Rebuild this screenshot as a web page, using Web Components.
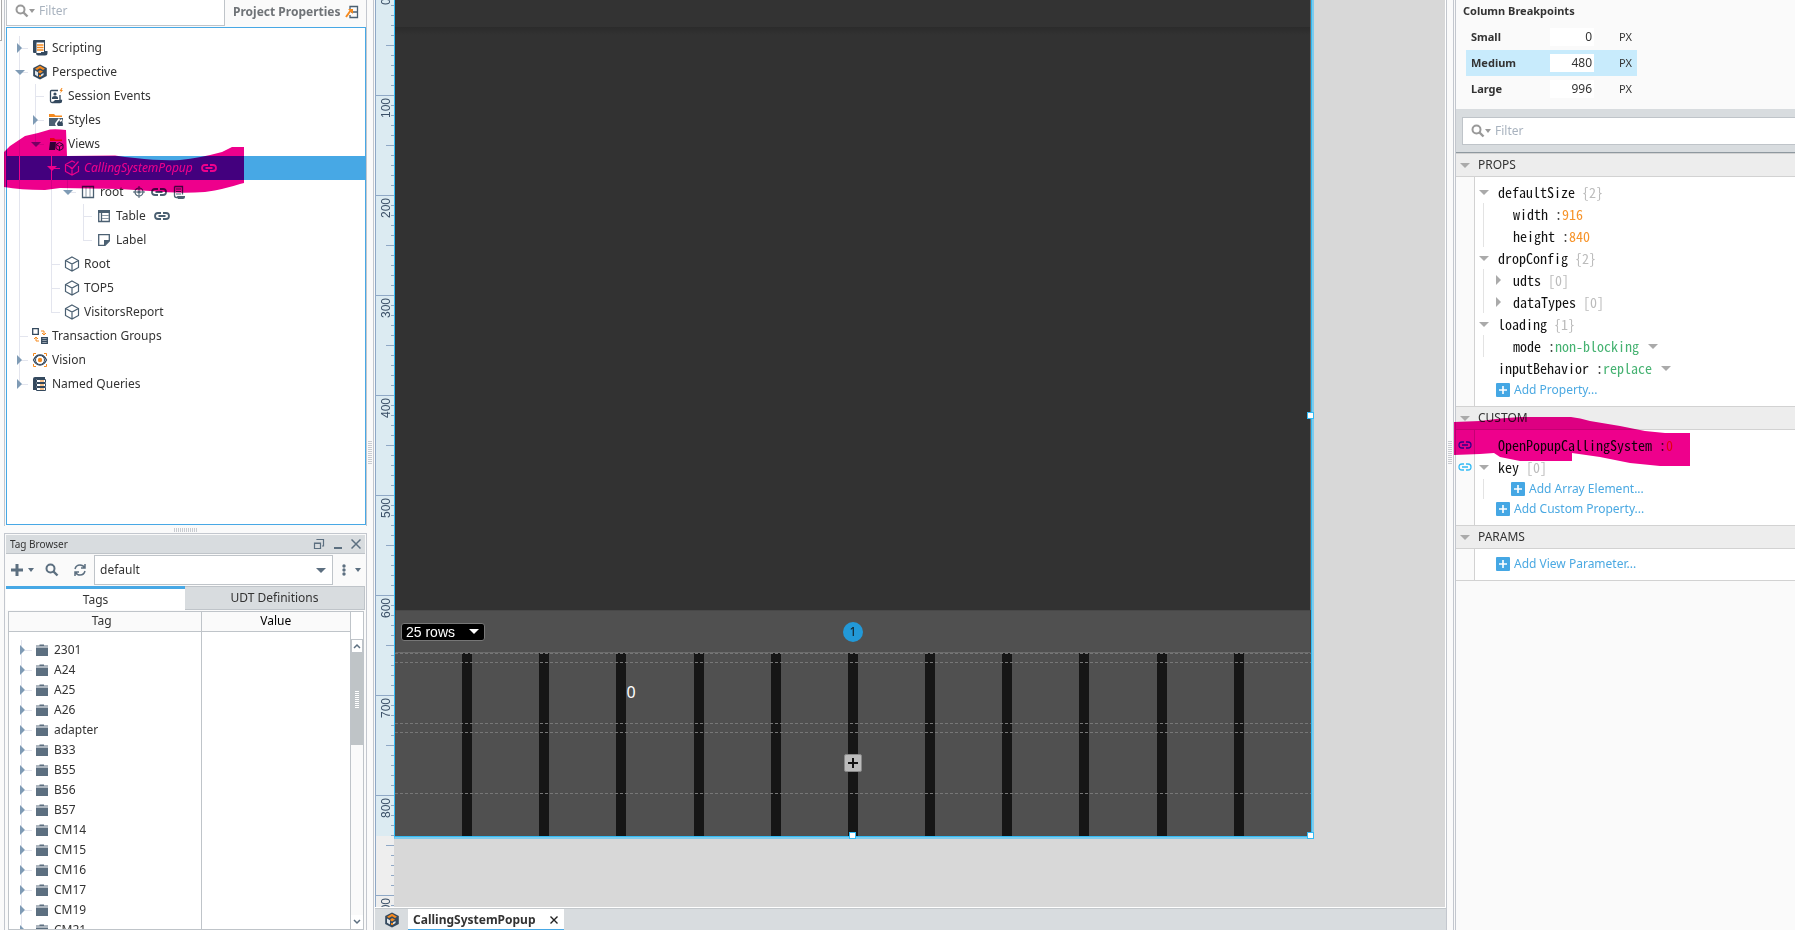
<!DOCTYPE html>
<html lang="en">
<head>
<meta charset="utf-8">
<title>Designer</title>
<style>
    html, body{
        height: 100%;
        margin: 0;
    }
    body{
        overflow: hidden;
        background-color: #fafafa;
        color: #333;
        font: 12px/20px "Noto Sans", "Open Sans", sans-serif;
    }
</style>
</head>
<body>
<designer-app></designer-app>

<script>
const BASE = /*html*/`
<style>
    *{ box-sizing: border-box; }
    button, input, select{
        font: inherit;
        color: inherit;
        margin: 0;
        padding: 0;
        border: 0;
        background: none;
        border-radius: 0;
        outline: 0;
    }
    a{ text-decoration: none; color: inherit; }
    svg, ui-icon{ flex: none; }
</style>
`

const define = (name, html, setup) => {
    const template = document.createElement('template');
    template.innerHTML = BASE + html;
    customElements.define(name, class extends HTMLElement{
        constructor(){
            super();
            this.attachShadow({mode: 'open'})
            this.shadowRoot.appendChild(template.content.cloneNode(true))
        }
        connectedCallback(){
            if (setup) setup(this, this.shadowRoot)
        }
    })
}

// ---------- icons, [viewBox width, viewBox height, markup]
const CUBE = '<path d="M8 1 14.5 4.500V11.500L8 15 1.500 11.500V4.500ZM1.500 4.500 8 8l6.500-3.500M8 8v7" fill="none" stroke="currentColor" stroke-width="1.200"/>';
const ICONS = {
    right: [6, 10, '<path d="M0 0 5 5 0 10Z" fill="currentColor"/>'],
    down: [10, 5, '<path d="M0 0H10L5 5Z" fill="currentColor"/>'],
    smalldown: [6, 4, '<path d="M0 0H6L3 4Z" fill="currentColor"/>'],
    scripting: [16, 16, '<path d="M2 0H13V11H15.500V13Q15.500 15.500 13 15.500H6Q4 15.500 4 13H2Q1 13 1 12V1Q1 0 2 0Z" fill="#34495e"/><path d="M4.500 2.500H12V12H9V13H4.500Z" fill="#fff"/><path d="M5 5H11.500M5 7.500H11.500M5 10H11.500" stroke="#f58a1f" stroke-width="1.300"/>'],
    perspective: [16, 16, '<path d="M8 .5 14.800 4V12L8 15.500 1.200 12V4Z" fill="#34495e"/><path d="M3 4.800 8 1.700l5 3.100-2 1.200L8 4.200 5 6Z" fill="#f58a1f"/><path d="M3 6.500 6 8.200V12.500L3 10.800Z" fill="#dfe5ea"/><path d="M8 6 11 7.500 8 9.500 6 8Z" fill="#f58a1f"/><path d="M9 10.500 11.500 9V11L9 12.500Z" fill="#dfe5ea"/><path d="M7 11h2v2H7Z" fill="#f58a1f"/>'],
    session: [16, 16, '<path d="M10 2.500H3.500Q2.500 2.500 2.500 3.500V13Q2.500 14.500 4 14.500H12Q13.500 14.500 13.500 12.500H12V7" fill="none" stroke="#34495e" stroke-width="1.300"/><path d="M5 14 7 12h7q0 3-2 3H5Z" fill="#34495e"/><circle cx="7" cy="6" r="1.600" fill="#34495e"/><path d="M4 10q0-2 3-2t3 2v1H4Z" fill="#34495e"/><path d="M13.500 0 11.500 3H13L12 5.500 15 2H13.500L14.500 0Z" fill="#f58a1f"/>'],
    styles: [16, 16, '<path d="M1 2H6L7.500 3.500H14V5H1Z" fill="#f58a1f"/><path d="M1 6H15V14H1Z" fill="#4b6072"/><path d="M8 14q-2-2 0-4l3-4 1 2 2-1 1 4-1 3Z" fill="#fff"/><path d="M10 14q-2-2 0-4l1.500-2 .5 2 2-1 1 3-1 2Z" fill="#34495e"/>'],
    views: [16, 16, '<path d="M2 2H6L7.500 3.500H14V5H2Z" fill="#f58a1f"/><path d="M2 6H8L7 14H1Z" fill="#34495e"/><path d="M11.500 6.500 15 8.500V12.500L11.500 14.500 8 12.500V8.500ZM8 8.500 11.500 10.500 15 8.500M11.500 10.500V14.500" fill="none" stroke="#34495e"/>'],
    cube: [16, 16, CUBE],
    cubeedit: [16, 16, '<path d="M14.500 6V11.500L8 15 1.500 11.500V4.500L8 1 11 2.500M1.500 4.500 8 8V15M5.500 6.500 8 9 14.500 1.500" fill="none" stroke="currentColor" stroke-width="1.200"/>'],
    columns: [14, 14, '<path d="M1.500 1.500h11v11h-11Z" fill="none" stroke="#4b6072" stroke-width="1.300"/><path d="M5 2v10M9 2v10" stroke="#8c99a5"/>'],
    target: [14, 14, '<circle cx="7" cy="7" r="4" fill="none" stroke="#4b6072" stroke-width="1.200"/><circle cx="7" cy="7" r="1.800" fill="#4b6072"/><path d="M7 1V5M7 9V13M1 7H5M9 7H13" stroke="#4b6072"/>'],
    link: [16, 8, '<path d="M7 1H4Q1 1 1 4T4 7H7M9 1h3q3 0 3 3T12 7H9M4.500 4h7" fill="none" stroke="currentColor" stroke-width="1.800"/>'],
    linkthin: [14, 8, '<path d="M6 1H4Q1 1 1 4T4 7H6M8 1h2q3 0 3 3T10 7H8M4 4h6" fill="none" stroke="currentColor" stroke-width="1.300"/>'],
    script: [14, 14, '<path d="M2.500 1.500h8v8M2.500 1.500v9q0 2 2 2h6" fill="none" stroke="#4b6072" stroke-width="1.300"/><path d="M4 4h5M4 6.500h5M4 9h5" stroke="#4b6072"/><path d="M5 11h8v1q0 2-2 2H6Z" fill="#4b6072"/>'],
    table: [14, 14, '<path d="M1 1h12v3H1Z" fill="#4b6072"/><path d="M1.700 2v10.500h10.600V2M4.500 4v8.500" fill="none" stroke="#4b6072" stroke-width="1.300"/><path d="M5 6.500h7M5 9.500h7" stroke="#8c99a5"/>'],
    label: [14, 14, '<path d="M1.700 1.700h10.600V8L8 12.300H1.700Z" fill="none" stroke="#4b6072" stroke-width="1.300"/><path d="M7 13V7h6Z" fill="#4b6072"/>'],
    transaction: [16, 16, '<path d="M.7.700h5.600v5.600H.700ZM9.700 9.700h5.600v5.600H9.700ZM10 11.500h5M10 13.500h5" fill="none" stroke="#34495e" stroke-width="1.300"/><path d="M9 3h3v3M10 5l2 2 2-2M7 13H4v-3M2 11l2-2 2 2" fill="none" stroke="#f58a1f"/>'],
    vision: [16, 16, '<path d="M1.500 4V1.500H4M12 1.500h2.500V4M14.500 12v2.500H12M4 14.500H1.500V12" fill="none" stroke="#f58a1f"/><path d="M1.500 8Q4 3 8 3t6.500 5q-2.500 5-6.500 5T1.500 8Z" fill="none" stroke="#34495e" stroke-width="1.300"/><circle cx="8" cy="8" r="4.500" fill="#fff" stroke="#34495e"/><circle cx="8" cy="8" r="2.200" fill="#f58a1f"/>'],
    queries: [16, 16, '<path d="M1 3Q1 1 3 1H13V3H4V14H1Z" fill="#34495e"/><path d="M4.500 3.500h9v3h-9ZM4.500 7.500h9v3h-9ZM4.500 11.500h9v3h-9Z" fill="#fff" stroke="#34495e"/><path d="M8 5h4M8 9h4M8 13h4" stroke="#f58a1f"/>'],
    folder: [14, 12, '<path d="M1 1.500H4.500V.5H9V1.500H13V2.500H1Z" fill="#5c6f80"/><path d="M1 3.500H13V12H1Z" fill="#5c6f80"/>'],
    search: [14, 14, '<circle cx="5.500" cy="5.500" r="4" fill="none" stroke="currentColor" stroke-width="2"/><path d="M8.500 8.500 12.500 12.500" stroke="currentColor" stroke-width="2.400"/>'],
    plus: [12, 12, '<path d="M6 0V12M0 6H12" stroke="currentColor" stroke-width="3"/>'],
    refresh: [14, 14, '<path d="M2 6Q3 2 7 2q3 0 5 3M12 1v4H8M12 8q-1 4-5 4-3 0-5-3M2 13V9H6" fill="none" stroke="currentColor" stroke-width="1.500"/>'],
    dots: [4, 12, '<circle cx="2" cy="2" r="1.700" fill="currentColor"/><circle cx="2" cy="6" r="1.700" fill="currentColor"/><circle cx="2" cy="10" r="1.700" fill="currentColor"/>'],
    restore: [12, 12, '<path d="M1.500 5h6v5.500h-6ZM1 5.500h7M4 2V1.500H10.500V8H9" fill="none" stroke="currentColor" stroke-width="1.200"/>'],
    minimize: [8, 12, '<path d="M0 10H8" stroke="currentColor" stroke-width="2"/>'],
    close: [10, 10, '<path d="M.5.500 9.500 9.500M9.500.500.5 9.500" stroke="currentColor" stroke-width="1.500"/>'],
    export: [14, 14, '<path d="M5 4V1.500H12.500V12.500H5V10M6 7h6" fill="none" stroke="#4b6072" stroke-width="1.300"/><path d="M1 12 6 5" stroke="#f58a1f" stroke-width="2"/><path d="M3 4H8V9Z" fill="#f58a1f"/>'],
    add: [14, 14, '<rect width="14" height="14" rx="1" fill="#45a7e4"/><path d="M7 3V11M3 7H11" stroke="#fff" stroke-width="1.600"/>'],
    chevup: [8, 6, '<path d="M1 5 4 2 7 5" fill="none" stroke="currentColor" stroke-width="1.500"/>'],
    chevdown: [8, 6, '<path d="M1 1 4 4 7 1" fill="none" stroke="currentColor" stroke-width="1.500"/>']
}

define('ui-icon', /*html*/`
<style>
    :host{ display: inline-flex; align-items: center; justify-content: center; }
    #box{ display: flex; }
</style>
<span id="box"></span>
`, (host, root) => {
    const [w, h, markup] = ICONS[host.getAttribute('name')];
    root.getElementById('box').innerHTML = `<svg width="${w}" height="${h}" viewBox="0 0 ${w} ${h}" aria-hidden="true">${markup}</svg>`;
})

// ---------- splitter with its grip
define('split-bar', /*html*/`
<style>
    :host{
        display: flex;
        align-items: center;
        justify-content: center;
        width: 8px;
        border: 1px solid #c3c7ce;
        border-width: 0 1px;
    }
    .grip{
        width: 4px;
        height: 24px;
        margin-bottom: 24px;
        background: repeating-linear-gradient(#c8cbd0 0 1px, transparent 1px 2px);
    }
    :host([flat]){ width: auto; height: 7px; border: 0; }
    :host([flat]) .grip{
        width: 24px;
        height: 4px;
        margin: 0;
        background: repeating-linear-gradient(90deg, #c8cbd0 0 1px, transparent 1px 2px);
    }
</style>
<div class="grip"></div>
`)

// ---------- filter box
define('filter-box', /*html*/`
<style>
    :host{
        display: flex;
        align-items: center;
        background-color: #fff;
        border: 1px solid #bfc4c9;
        color: #999;
        padding-left: 8px;
    }
    input{ flex: 1; min-width: 0; margin-left: 4px; color: #333; }
    input::placeholder{ color: #a9b3bf; opacity: 1; }
</style>
<ui-icon name="search"></ui-icon>
<ui-icon name="smalldown"></ui-icon>
<input type="text" placeholder="Filter" aria-label="Filter">
`)

// ---------- project tree row, guides: one letter per level, l = line, t = tee, e = end, n = none
define('tree-item', /*html*/`
<style>
    :host{
        display: flex;
        align-items: center;
        height: 24px;
        padding-left: 5px;
        white-space: nowrap;
        color: #333;
    }
    :host([selected]){ background-color: #47a8e5; color: #fff; font-style: italic; }
    #guides{ display: flex; height: 100%; }
    i{
        display: flex;
        align-items: center;
        justify-content: center;
        width: 16px;
        color: #7f9bb5;
        --g: #e3e5ee;
    }
    :host([selected]) i{ color: #fff; --g: #fff; }
    .l{ background: linear-gradient(var(--g), var(--g)) 7px 0 / 1px 100% no-repeat; }
    .t{ background: linear-gradient(var(--g), var(--g)) 7px 0 / 1px 100% no-repeat, linear-gradient(var(--g), var(--g)) 8px 12px / 8px 1px no-repeat; }
    .e{ background: linear-gradient(var(--g), var(--g)) 7px 0 / 1px 12px no-repeat, linear-gradient(var(--g), var(--g)) 7px 12px / 9px 1px no-repeat; }
    #icon{ display: flex; width: 24px; justify-content: center; color: #4b6072; }
    :host([selected]) #icon{ color: #fff; }
    .badges{ display: flex; align-items: center; gap: 5px; margin-left: 8px; color: #4b6072; }
    :host([selected]) .badges{ color: #fff; }
</style>
<span id="guides"></span>
<span id="icon"></span>
<slot></slot>
<span class="badges"><slot name="badge"></slot></span>
`, (host, root) => {
    const guides = host.getAttribute('guides');
    const arrow = host.getAttribute('arrow');
    root.getElementById('guides').innerHTML = [...guides].map((g, i) => {
        const own = i == guides.length - 1 && arrow;
        return `<i class="${g}">${own ? `<ui-icon name="${arrow}"></ui-icon>` : ''}</i>`
    }).join('');
    root.getElementById('icon').innerHTML = `<ui-icon name="${host.getAttribute('icon')}"></ui-icon>`;
})

define('project-tree', /*html*/`
<style>
    :host{
        display: block;
        position: relative;
        border: 1px solid #47a8e5;
        background-color: #fff;
        padding-top: 8px;
    }
    /* marker stroke drawn over the selected row */
    .marker{
        position: absolute;
        left: -3px;
        top: 101px;
        mix-blend-mode: multiply;
        pointer-events: none;
    }
</style>
<tree-item guides="t" arrow="right" icon="scripting">Scripting</tree-item>
<tree-item guides="t" arrow="down" icon="perspective">Perspective</tree-item>
<tree-item guides="lt" icon="session">Session Events</tree-item>
<tree-item guides="lt" arrow="right" icon="styles">Styles</tree-item>
<tree-item guides="le" arrow="down" icon="views">Views</tree-item>
<tree-item guides="lnt" arrow="down" icon="cubeedit" selected>CallingSystemPopup<ui-icon slot="badge" name="link"></ui-icon></tree-item>
<tree-item guides="lnle" arrow="down" icon="columns">root
    <ui-icon slot="badge" name="target"></ui-icon>
    <ui-icon slot="badge" name="link"></ui-icon>
    <ui-icon slot="badge" name="script"></ui-icon>
</tree-item>
<tree-item guides="lnlnt" icon="table">Table<ui-icon slot="badge" name="link"></ui-icon></tree-item>
<tree-item guides="lnlne" icon="label">Label</tree-item>
<tree-item guides="lnt" icon="cube">Root</tree-item>
<tree-item guides="lnt" icon="cube">TOP5</tree-item>
<tree-item guides="lne" icon="cube">VisitorsReport</tree-item>
<tree-item guides="t" icon="transaction">Transaction Groups</tree-item>
<tree-item guides="t" arrow="right" icon="vision">Vision</tree-item>
<tree-item guides="e" arrow="right" icon="queries">Named Queries</tree-item>
<svg class="marker" width="240" height="65" viewBox="4 129 240 65" aria-hidden="true">
    <path fill="#ee008c" d="M4 152 10 146 25 136 38 133 50 129.500Q58 129 66 130L67 156 115 155.500Q125 157 135 158 160 161 180 160 200 158 222 152L232 147H244V183L240 184Q225 189 205 192 180 194 150 191L120 189 60 188 45 190Q20 190 4 187Z"/>
</svg>
`)

// ---------- tag browser
define('tag-browser', /*html*/`
<style>
    :host{
        display: flex;
        flex-direction: column;
        min-height: 0;
        border: 1px solid #c3c7ce;
        border-bottom: 0;
        padding: 1px 1px 0;
    }
    header{
        display: flex;
        align-items: center;
        gap: 9px;
        height: 19px;
        padding: 0 4px;
        background-color: #d8dcdf;
        border-bottom: 1px solid #bfc4c9;
        font-size: 10px;
        color: #5c6f80;
    }
    header h2{ flex: 1; margin: 0; font: inherit; color: #333; }
    button{ display: flex; align-items: center; }
    .tools{
        display: flex;
        align-items: center;
        height: 32px;
        padding: 0 4px 0 5px;
        color: #5c6f80;
    }
    .tools button{ gap: 5px; }
    .search{ margin-left: 11px; }
    .refresh{ margin: 0 7px 0 14px; }
    .pick{
        flex: 1;
        display: flex;
        align-items: center;
        height: 30px;
        margin-right: 9px;
        padding-right: 6px;
        border: 1px solid #bfc4c9;
        background-color: #fff;
    }
    .pick select{ flex: 1; appearance: none; padding-left: 5px; color: #333; }
    .tools .more{ gap: 9px; }
    .tabs{ display: flex; height: 25px; }
    .tabs button{
        flex: 1;
        justify-content: center;
        background-color: #d8dcdf;
        border: 1px solid #bfc4c9;
        border-left: 0;
        height: 24px;
    }
    .tabs .on{ background-color: #fff; border: 0; border-top: 3px solid #47a8e5; }
    .grid{
        flex: 1;
        display: flex;
        min-height: 0;
        overflow: hidden;
        margin: 0 1px 0 2px;
        border: 1px solid #bfc4c9;
        background-color: #fff;
    }
    .list{ flex: 1; overflow: hidden; border-right: 1px solid #bfc4c9;
        background: linear-gradient(#bfc4c9, #bfc4c9) 192px 0 / 1px 100% no-repeat; }
    table{ width: 100%; table-layout: fixed; border-collapse: collapse; }
    th{
        height: 19px;
        padding: 0;
        line-height: 18px;
        font-weight: normal;
        background-color: #fafafa;
        border-bottom: 1px solid #bfc4c9;
    }
    th:first-child{ width: 192px; padding-right: 6px; border-right: 1px solid #bfc4c9; }
    .value{ color: #000; }
    .gap td{ height: 9px; padding: 0; }
    td{ height: 20px; padding: 0 0 0 4px; }
    td div{ display: flex; align-items: center; height: 20px; }
    i{
        display: flex;
        align-items: center;
        justify-content: center;
        width: 19px;
        height: 100%;
        color: #7f9bb5;
        background: linear-gradient(#e3e5ee, #e3e5ee) 8px 0 / 1px 100% no-repeat, linear-gradient(#e3e5ee, #e3e5ee) 12px 10px / 7px 1px no-repeat;
    }
    td .folder{ margin: 0 5px 0 3px; }
    .scroll{
        display: flex;
        flex-direction: column;
        width: 12px;
        padding-top: 27px;
        color: #5c6f80;
    }
    .scroll ui-icon{ height: 14px; }
    .up{ border: 1px solid #bfc4c9; }
    .thumb{
        display: flex;
        align-items: center;
        justify-content: center;
        height: 92px;
        background-color: #bfc4c7;
    }
    .thumb b{ width: 4px; height: 17px; background: repeating-linear-gradient(#fff 0 1px, transparent 1px 2px); }
    .track{ flex: 1; background-color: #fafafa; }
</style>
<header>
    <h2>Tag Browser</h2>
    <button aria-label="Restore"><ui-icon name="restore"></ui-icon></button>
    <button aria-label="Minimize"><ui-icon name="minimize"></ui-icon></button>
    <button aria-label="Close"><ui-icon name="close"></ui-icon></button>
</header>
<div class="tools">
    <button aria-label="Add tag"><ui-icon name="plus"></ui-icon><ui-icon name="smalldown"></ui-icon></button>
    <button class="search" aria-label="Search"><ui-icon name="search"></ui-icon></button>
    <button class="refresh" aria-label="Refresh"><ui-icon name="refresh"></ui-icon></button>
    <label class="pick"><select aria-label="Tag provider"><option>default</option></select><ui-icon name="down"></ui-icon></label>
    <button class="more" aria-label="More"><ui-icon name="dots"></ui-icon><ui-icon name="smalldown"></ui-icon></button>
</div>
<div class="tabs"><button class="on">Tags</button><button>UDT Definitions</button></div>
<div class="grid">
    <div class="list">
        <table>
            <thead><tr><th>Tag</th><th class="value">Value</th></tr></thead>
            <tbody><tr class="gap"><td></td><td></td></tr></tbody>
        </table>
    </div>
    <div class="scroll">
        <ui-icon class="up" name="chevup"></ui-icon>
        <div class="thumb"><b></b></div>
        <div class="track"></div>
        <ui-icon name="chevdown"></ui-icon>
    </div>
</div>
`, (host, root) => {
    const tags = ['2301', 'A24', 'A25', 'A26', 'adapter', 'B33', 'B55', 'B56', 'B57', 'CM14', 'CM15', 'CM16', 'CM17', 'CM19', 'CM21'];
    root.querySelector('tbody').insertAdjacentHTML('beforeend', tags.map(tag =>
        `<tr><td><div><i><ui-icon name="right"></ui-icon></i><ui-icon class="folder" name="folder"></ui-icon>${tag}</div></td><td></td></tr>`
    ).join(''))
})

// ---------- left side
define('project-panel', /*html*/`
<style>
    :host{ display: flex; min-height: 0; }
    .edge{ width: 2px; height: 41px; margin-right: 2px; border: 1px solid #aaa; border-width: 0 1px 1px 0; background-color: #fff; }
    .col{ flex: 1; min-width: 0; display: flex; flex-direction: column; }
    .browser{
        display: flex;
        flex-direction: column;
        height: 526px;
        padding-left: 1px;
        border: 1px solid #c3c7ce;
        border-width: 0 1px;
    }
    .top{ display: flex; height: 27px; }
    filter-box{ width: 219px; height: 26px; border-top: 0; padding-bottom: 3px; }
    .top a{
        display: flex;
        align-items: center;
        gap: 4px;
        height: 23px;
        margin-left: 8px;
        font-weight: bold;
        color: #6f7377;
        white-space: nowrap;
    }
    project-tree{ flex: 1; margin-bottom: 1px; }
    tag-browser{ flex: 1; }
</style>
<div class="edge"></div>
<div class="col">
    <div class="browser">
        <div class="top">
            <filter-box></filter-box>
            <a href="#">Project Properties <ui-icon name="export"></ui-icon></a>
        </div>
        <project-tree></project-tree>
    </div>
    <split-bar flat></split-bar>
    <tag-browser></tag-browser>
</div>
`)

// ---------- ruler
define('view-ruler', /*html*/`
<style>
    :host{
        display: block;
        width: 19px;
        overflow: hidden;
        border-left: 1px solid #8fa8c6;
        background: linear-gradient(#dcebf2 0 0) 0 0 / 100% calc(100% - 71px) no-repeat #eee;
        font: 12px/14px "Liberation Sans", Arial, sans-serif;
        color: #3b5068;
    }
    #marks{ margin-top: -5px; }
    #marks div{
        display: flex;
        height: 100px;
        padding: 2px 0 0 3px;
        border-top: 1px solid #8fa8c6;
        background:
            repeating-linear-gradient(transparent 0 9px, #8fa8c6 9px 10px) right / 3px 100% no-repeat,
            linear-gradient(#8fa8c6, #8fa8c6) right 49px / 8px 1px no-repeat;
    }
    span{ writing-mode: vertical-rl; transform: rotate(180deg); text-align: right; }
</style>
<div id="marks"></div>
`, (host, root) => {
    let html = '';
    for (let n = 0; n <= 900; n += 100) html += `<div><span>${n}</span></div>`;
    root.getElementById('marks').innerHTML = html;
})

// ---------- the view on the canvas
define('view-canvas', /*html*/`
<style>
    :host{ display: block; background-color: #d8d8d8; }
    .view{
        position: relative;
        display: flex;
        flex-direction: column;
        height: calc(100% - 68px);
        margin-right: 131px;
        border: solid #7fcbec;
        border-width: 0 3px 3px 1px;
        border-left-color: #33bbf5;
        background-color: #505050;
    }
    .line{
        position: absolute;
        inset: 0 -1px -1px 0;
        border: solid #33bbf5;
        border-width: 0 1px 1px 0;
        pointer-events: none;
    }
    .head{ height: 27px; background-color: #333; }
    .body{ flex: 1; background: linear-gradient(#2b2b2b, #323232 8px); }
    .head, .body{ border-right: 1px solid #6a6a6a; }
    .pager{
        display: grid;
        grid-template-columns: 1fr auto 1fr;
        align-items: center;
        height: 43px;
        border: 1px solid #484848;
        border-bottom-color: #6c6c6c;
    }
    .rows{
        display: flex;
        align-items: center;
        justify-self: start;
        width: 84px;
        height: 18px;
        margin-left: 5px;
        padding-right: 5px;
        border: 1px solid #777;
        border-radius: 3px;
        background-color: #000;
        color: #fff;
        font: 14px/16px "Liberation Sans", Arial, sans-serif;
    }
    .rows select{ flex: 1; min-width: 0; appearance: none; padding-left: 4px; }
    .page{
        width: 20px;
        height: 20px;
        border-radius: 10px;
        background-color: #2299d8;
        color: #111;
        text-align: center;
    }
    .columns{
        position: relative;
        display: grid;
        grid-template-columns: repeat(12, 1fr);
        gap: 10px;
        height: 183px;
        background-color: #161616;
    }
    .columns > div{ background-color: #505050; }
    .columns .label{ color: #fff; font-size: 16px; padding-top: 29px; }
    .dashes{ position: absolute; inset: 0; display: flex; flex-direction: column; }
    .dashes i{ height: 9px; background: repeating-linear-gradient(90deg, #777 0 3px, transparent 3px 5px) 0 0 / 100% 1px no-repeat; }
    .dashes i:nth-child(even){ height: 61px; }
    .add{
        position: absolute;
        left: calc(50% - 9px);
        top: 101px;
        display: flex;
        align-items: center;
        justify-content: center;
        width: 18px;
        height: 18px;
        border: 1px solid #888;
        border-radius: 2px;
        background-color: #bbb;
        color: #111;
    }
    .handle{ position: absolute; width: 7px; height: 7px; border: 1px solid #33bbf5; background-color: #fff; }
    .s{ left: calc(50% - 4px); bottom: -3px; }
    .se{ right: -3px; bottom: -3px; }
    .e{ right: -3px; top: calc(50% - 6px); }
</style>
<div class="view">
    <div class="head"></div>
    <div class="body"></div>
    <div class="pager">
        <label class="rows"><select aria-label="Rows per page"><option>25 rows</option></select><ui-icon name="down"></ui-icon></label>
        <button class="page">1</button>
    </div>
    <div class="columns">
        <div></div><div></div><div></div><div class="label">0</div><div></div><div></div>
        <div></div><div></div><div></div><div></div><div></div><div></div>
        <span class="dashes"><i></i><i></i><i></i><i></i><i></i></span>
        <button class="add" aria-label="Add row"><svg width="10" height="10"><path d="M5 0V10M0 5H10" stroke="currentColor" stroke-width="2"/></svg></button>
    </div>
    <span class="line"></span>
    <span class="handle s"></span>
    <span class="handle se"></span>
    <span class="handle e"></span>
</div>
`)

define('view-editor', /*html*/`
<style>
    :host{ display: flex; flex-direction: column; min-width: 0; padding-left: 1px; }
    .stage{ flex: 1; display: flex; min-height: 0; background-color: #fff; padding: 0 1px 1px 0; }
    view-canvas{ flex: 1; }
    .tabs{
        display: flex;
        height: 22px;
        border-top: 1px solid #c3c8cc;
        background-color: #d8dcdf;
        padding-left: 9px;
    }
    .tab{
        display: flex;
        align-items: center;
        gap: 14px;
        margin-left: 8px;
        padding: 2px 6px 0 5px;
        background-color: #fff;
        border-bottom: 1px solid #47a8e5;
        font-weight: bold;
    }
    .tab svg{ display: block; }
</style>
<div class="stage">
    <view-ruler></view-ruler>
    <view-canvas></view-canvas>
</div>
<div class="tabs">
    <ui-icon name="perspective"></ui-icon>
    <div class="tab">CallingSystemPopup
        <button aria-label="Close tab"><svg width="8" height="8"><path d="M.5.500 7.500 7.500M7.500.500.500 7.500" stroke="#222" stroke-width="1.400"/></svg></button>
    </div>
</div>
`)

// ---------- property editor
define('prop-section', /*html*/`
<style>
    :host{ display: block; }
    header{
        display: flex;
        align-items: center;
        gap: 8px;
        height: 24px;
        padding-left: 4px;
        background-color: #ededed;
        border: 1px solid #d2d2d2;
        border-width: 1px 0;
        color: #aaa;
    }
    h3{ margin: 0; font: inherit; color: #333; }
    .body{ padding: 5px 0 6px; background: linear-gradient(90deg, #fafafa 18px, #d2d2d2 18px 19px, #fff 19px); }
</style>
<header><ui-icon name="down"></ui-icon><h3><slot name="title"></slot></h3></header>
<div class="body"><slot></slot></div>
`)

define('prop-row', /*html*/`
<style>
    :host{
        box-sizing: border-box;
        display: flex;
        align-items: center;
        height: 22px;
        padding-bottom: 2px;
        font: 14px/20px "Noto Sans Mono CJK JP", "DejaVu Sans Mono", monospace;
        color: #111;
        white-space: pre;
    }
    .bind{ display: flex; justify-content: center; width: 18px; margin-right: 1px; color: #33bbf5; }
    .guide{ display: none; width: 15px; height: 22px; background: linear-gradient(#e3e3e3, #e3e3e3) 8px 0 / 1px 100% no-repeat; }
    :host([nested]) .guide{ display: block; }
    .arrow{ display: flex; justify-content: center; width: 18px; margin-right: 5px; color: #aaa; }
    .count{ margin-left: 7px; color: #bbb; }
    .colon{ margin-left: 7px; color: #444; }
    .number{ color: #f7942a; }
    .text{ color: #45b271; }
    .red{ color: #f3301c; }
    .pick{ margin-left: 9px; color: #aaa; }
</style>
<span class="bind"></span><span class="guide"></span><span class="arrow"></span><slot></slot><span id="rest" style="display: contents"></span>
`, (host, root) => {
    const {bound, arrow, count, value, kind, pick} = host.dataset;
    if (bound != null) root.querySelector('.bind').innerHTML = '<ui-icon name="linkthin"></ui-icon>';
    if (arrow) root.querySelector('.arrow').innerHTML = `<ui-icon name="${arrow}"></ui-icon>`;
    root.getElementById('rest').innerHTML =
        (count ? `<span class="count">${count}</span>` : '') +
        (value ? `<span class="colon">:</span><span class="${kind}">${value}</span>` : '') +
        (pick != null ? '<ui-icon class="pick" name="down"></ui-icon>' : '');
})

define('add-link', /*html*/`
<style>
    :host{ display: flex; height: 20px; padding-left: 40px; color: #4ba9e2; }
    :host([nested]){ padding-left: 19px; }
    .guide{ display: none; width: 36px; background: linear-gradient(#e3e3e3, #e3e3e3) 8px 0 / 1px 100% no-repeat; }
    :host([nested]) .guide{ display: block; }
    a{ display: flex; align-items: center; gap: 4px; }
</style>
<span class="guide"></span><a href="#"><ui-icon name="add"></ui-icon><slot></slot></a>
`)

define('break-point', /*html*/`
<style>
    :host{
        display: flex;
        align-items: center;
        width: 171px;
        height: 26px;
        padding: 0 5px;
        box-sizing: border-box;
        font-size: 11px;
    }
    :host([active]){ background-color: #c8ebfc; }
    label{ width: 79px; font-weight: bold; }
    input{ width: 44px; height: 18px; padding-right: 2px; background-color: #fff; text-align: right; font-size: 12px; }
    span{ margin-left: auto; }
</style>
<label for="size"></label><input id="size" type="text"><span>PX</span>
`, (host, root) => {
    root.querySelector('label').textContent = host.getAttribute('label');
    root.querySelector('input').value = host.getAttribute('value');
})

define('property-editor', /*html*/`
<style>
    :host{ display: flex; min-width: 0; }
    .col{ position: relative; flex: 1; min-width: 0; margin-left: 1px; border-left: 1px solid #c3c7ce; }
    h2{ margin: 0 0 0 7px; padding-bottom: 3px; font-size: 11px; line-height: 21px; }
    break-point{ margin-left: 10px; }
    .filter{ height: 44px; margin-top: 7px; padding: 8px 0 0 6px; background-color: #d8dcdf; border-bottom: 1px solid #8e989f; }
    filter-box{ height: 28px; border-right: 0; }
    .props{ border-bottom: 1px solid #d2d2d2; }
    .marker{ position: absolute; left: -2px; top: 417px; mix-blend-mode: multiply; pointer-events: none; }
</style>
<split-bar></split-bar>
<div class="col">
    <h2>Column Breakpoints</h2>
    <break-point label="Small" value="0"></break-point>
    <break-point label="Medium" value="480" active></break-point>
    <break-point label="Large" value="996"></break-point>
    <div class="filter"><filter-box></filter-box></div>
    <div class="props">
        <prop-section><span slot="title">PROPS</span>
            <prop-row data-arrow="down" data-count="{2}">defaultSize</prop-row>
            <prop-row nested data-value="916" data-kind="number">width</prop-row>
            <prop-row nested data-value="840" data-kind="number">height</prop-row>
            <prop-row data-arrow="down" data-count="{2}">dropConfig</prop-row>
            <prop-row nested data-arrow="right" data-count="[0]">udts</prop-row>
            <prop-row nested data-arrow="right" data-count="[0]">dataTypes</prop-row>
            <prop-row data-arrow="down" data-count="{1}">loading</prop-row>
            <prop-row nested data-value="non-blocking" data-kind="text" data-pick>mode</prop-row>
            <prop-row data-value="replace" data-kind="text" data-pick>inputBehavior</prop-row>
            <add-link>Add Property...</add-link>
        </prop-section>
        <prop-section><span slot="title">CUSTOM</span>
            <prop-row data-bound data-value="0" data-kind="red">OpenPopupCallingSystem</prop-row>
            <prop-row data-bound data-arrow="down" data-count="[0]">key</prop-row>
            <add-link nested>Add Array Element...</add-link>
            <add-link>Add Custom Property...</add-link>
        </prop-section>
        <prop-section><span slot="title">PARAMS</span>
            <add-link>Add View Parameter...</add-link>
        </prop-section>
    </div>
    <!-- marker stroke over the bound property -->
    <svg class="marker" width="236" height="50" viewBox="1454 417 236 50" aria-hidden="true">
        <path fill="#ee008c" d="M1454 422 1480 421Q1500 418 1520 417H1571Q1580 418 1590 421L1620 426 1645 431 1665 433H1690V466H1660L1630 463 1600 457 1572 453V461H1520L1500 457 1494 453 1480 454 1454 455Z"/>
    </svg>
</div>
`)

define('designer-app', /*html*/`
<style>
    :host{
        display: grid;
        grid-template-columns: 367px 7px minmax(0, 1fr) 349px;
        grid-template-rows: 100%;
        height: 100vh;
        overflow: hidden;
    }
    .first{ box-sizing: border-box; width: 7px; border-left: 0; }
</style>
<project-panel></project-panel>
<split-bar class="first"></split-bar>
<view-editor></view-editor>
<property-editor></property-editor>
`)
</script>
</body>
</html>
